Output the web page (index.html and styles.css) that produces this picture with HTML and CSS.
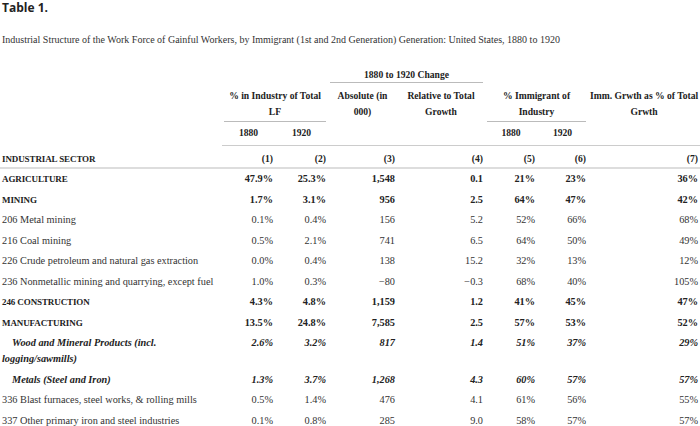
FILE: index.html
```html
<!DOCTYPE html>
<html>
<head>
<meta charset="utf-8">
<link rel="stylesheet" href="styles.css">
</head>
<body>
<h3 class="title">Table 1.</h3>
<p class="caption">Industrial Structure of the Work Force of Gainful Workers, by Immigrant (1st and 2nd Generation) Generation: United States, 1880 to 1920</p>
<table class="data">
  <colgroup>
    <col class="c0"><col class="c1"><col class="c2"><col class="c3"><col class="c4"><col class="c5"><col class="c6"><col class="c7">
  </colgroup>
  <thead>
    <tr class="h1">
      <th></th>
      <th colspan="2"></th>
      <th colspan="2"><div class="span">1880 to 1920 Change</div></th>
      <th colspan="2"></th>
      <th></th>
    </tr>
    <tr class="h2">
      <th></th>
      <th colspan="2"><div class="span pad">% in Industry of Total<br>LF</div></th>
      <th>Absolute (in<br>000)</th>
      <th>Relative to Total<br>Growth</th>
      <th colspan="2"><div class="span pad">% Immigrant of<br>Industry</div></th>
      <th>Imm. Grwth as % of Total<br>Grwth</th>
    </tr>
    <tr class="h3">
      <th class="nob"></th>
      <th>1880</th><th>1920</th><th></th><th></th><th>1880</th><th>1920</th><th></th>
    </tr>
    <tr class="h4">
      <th class="lab caps">INDUSTRIAL SECTOR</th>
      <th>(1)</th><th>(2)</th><th>(3)</th><th>(4)</th><th>(5)</th><th>(6)</th><th>(7)</th>
    </tr>
  </thead>
  <tbody>
    <tr class="b">
      <td class="caps">AGRICULTURE</td><td>47.9%</td><td>25.3%</td><td>1,548</td><td>0.1</td><td>21%</td><td>23%</td><td>36%</td>
    </tr>
    <tr class="b">
      <td class="caps">MINING</td><td>1.7%</td><td>3.1%</td><td>956</td><td>2.5</td><td>64%</td><td>47%</td><td>42%</td>
    </tr>
    <tr>
      <td>206 Metal mining</td><td>0.1%</td><td>0.4%</td><td>156</td><td>5.2</td><td>52%</td><td>66%</td><td>68%</td>
    </tr>
    <tr>
      <td>216 Coal mining</td><td>0.5%</td><td>2.1%</td><td>741</td><td>6.5</td><td>64%</td><td>50%</td><td>49%</td>
    </tr>
    <tr>
      <td>226 Crude petroleum and natural gas extraction</td><td>0.0%</td><td>0.4%</td><td>138</td><td>15.2</td><td>32%</td><td>13%</td><td>12%</td>
    </tr>
    <tr>
      <td>236 Nonmetallic mining and quarrying, except fuel</td><td>1.0%</td><td>0.3%</td><td>&minus;80</td><td>&minus;0.3</td><td>68%</td><td>40%</td><td>105%</td>
    </tr>
    <tr class="b">
      <td class="caps">246 CONSTRUCTION</td><td>4.3%</td><td>4.8%</td><td>1,159</td><td>1.2</td><td>41%</td><td>45%</td><td>47%</td>
    </tr>
    <tr class="b">
      <td class="caps">MANUFACTURING</td><td>13.5%</td><td>24.8%</td><td>7,585</td><td>2.5</td><td>57%</td><td>53%</td><td>52%</td>
    </tr>
    <tr class="bi">
      <td class="ind">Wood and Mineral Products (incl. logging/sawmills)</td><td>2.6%</td><td>3.2%</td><td>817</td><td>1.4</td><td>51%</td><td>37%</td><td>29%</td>
    </tr>
    <tr class="bi">
      <td class="ind">Metals (Steel and Iron)</td><td>1.3%</td><td>3.7%</td><td>1,268</td><td>4.3</td><td>60%</td><td>57%</td><td>57%</td>
    </tr>
    <tr>
      <td>336 Blast furnaces, steel works, &amp; rolling mills</td><td>0.5%</td><td>1.4%</td><td>476</td><td>4.1</td><td>61%</td><td>56%</td><td>55%</td>
    </tr>
    <tr>
      <td>337 Other primary iron and steel industries</td><td>0.1%</td><td>0.8%</td><td>285</td><td>9.0</td><td>58%</td><td>57%</td><td>57%</td>
    </tr>
  </tbody>
</table>
</body>
</html>
```
FILE: styles.css
```css
html, body {
  margin: 0;
  padding: 0;
  background: #fff;
  overflow: hidden;
}
body {
  width: 700px;
  font-family: "Liberation Serif", "Times New Roman", serif;
  color: #333;
}
.title {
  margin: 0;
  padding-left: 2px;
  font-family: "Open Sans", "Liberation Sans", sans-serif;
  font-weight: 700;
  font-size: 12px;
  line-height: 16px;
  color: #222;
}
.caption {
  margin: 16px 0 0;
  padding-left: 2px;
  font-size: 10px;
  line-height: 16px;
  color: #333;
}
.data {
  margin-top: 19px;
  width: 700px;
  border-collapse: collapse;
  table-layout: fixed;
  font-size: 10.3px;
  line-height: 16px;
}
.c0 { width: 222px; }
.c1 { width: 53px; }
.c2 { width: 53px; }
.c3 { width: 69px; }
.c4 { width: 88px; }
.c5 { width: 52px; }
.c6 { width: 51px; }
.c7 { width: 112px; }
.data th, .data td {
  padding: 0 2px;
  vertical-align: top;
}
.data th {
  font-weight: 700;
  font-size: 9.6px;
  color: #222;
  text-align: center;
  white-space: nowrap;
}
.span {
  border-bottom: 1px solid #bbb;
}
.h1 th { line-height: 15px; }
.h2 th { padding-top: 5px; }
.span.pad { padding-bottom: 1px; }
.h3 th {
  padding-top: 3px;
  padding-bottom: 4px;
  border-bottom: 1px solid #ccc;
}
.h3 th.nob { border-bottom: none; }
.h4 th {
  padding-top: 5px;
  padding-bottom: 0;
  text-align: right;
  border-bottom: 2px solid #ddd;
}
.h4 th.lab { text-align: left; }
.data td {
  padding-top: 2.25px;
  padding-bottom: 2.25px;
  text-align: right;
}
.data td:first-child { text-align: left; }
.b td { font-weight: 700; color: #222; }
.bi td { font-weight: 700; font-style: italic; color: #222; }
.ind { text-indent: 10px; }
.data .caps { font-size: 9px; letter-spacing: -0.1px; }
```
